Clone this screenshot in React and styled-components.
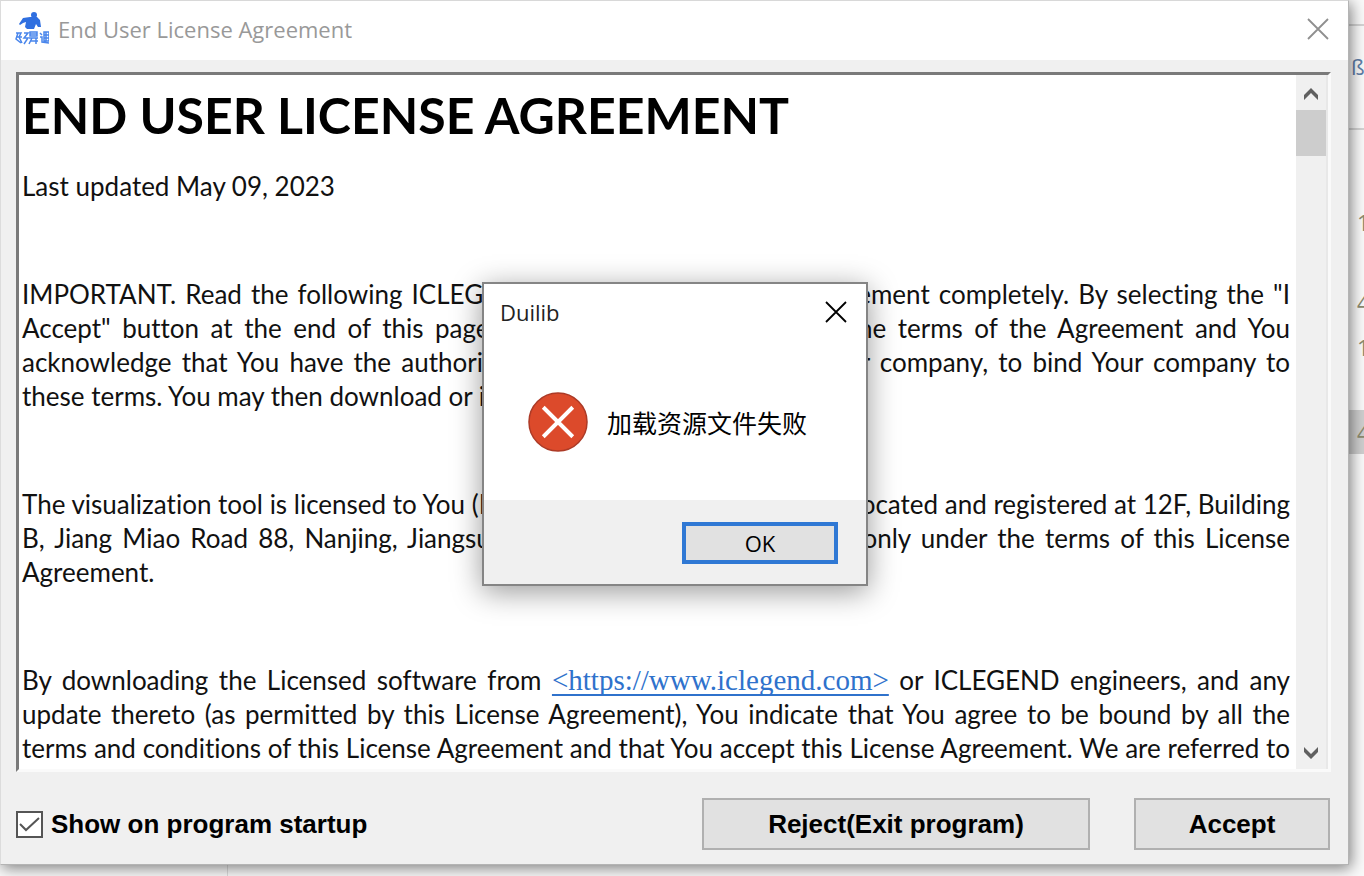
import React, { useState } from "react";
import styled, { createGlobalStyle, css } from "styled-components";

const GlobalStyle = createGlobalStyle`
  * {
    box-sizing: border-box;
  }

  body {
    margin: 0;
    background: #f7f7f7;
    color: #000;
    font-family: "Open Sans", "Noto Sans CJK SC", sans-serif;
    overflow: hidden;
  }
`;

const Desktop = styled.main`
  display: grid;
  grid-template-columns: minmax(0, 1fr) 15px;
  grid-template-rows: auto 12px;
  min-height: 100vh;
`;

const Window = styled.section`
  position: relative;
  z-index: 1;
  display: flex;
  flex-direction: column;
  border: 1px solid #b4b4b4;
  border-left-color: #dcdcdc;
  border-top-color: #d8d8d8;
  background: #f0f0f0;
  box-shadow: 2px 3px 14px rgba(0, 0, 0, 0.5);
`;

const TitleBar = styled.header`
  display: flex;
  align-items: center;
  gap: 9px;
  height: 59px;
  padding: 0 19px 4px 14px;
  background: #fff;
`;

const WindowTitle = styled.h2`
  flex: 1;
  margin: 0;
  color: #999;
  font-size: 22px;
  font-weight: 400;
  line-height: 32px;
`;

const IconButton = styled.button`
  display: flex;
  padding: 0;
  border: none;
  background: none;
  color: ${({ $color }) => $color || "#000"};
  cursor: pointer;
`;

const Sheet = styled.div`
  display: flex;
  margin: 12px 17px 0 15px;
  border: 3px solid;
  border-color: #7a7a7a #fafafa #fafafa #7a7a7a;
  background: #fff;
`;

const Agreement = styled.article`
  flex: 1;
  min-width: 0;
  height: 694px;
  padding: 0 6px 0 3px;
  overflow: hidden;
  color: #111;
  font-family: Lato, "Open Sans", sans-serif;
  font-size: 26px;
  font-variant-ligatures: none;
  line-height: 34px;
`;

const Heading = styled.h1`
  margin: 8px 0 22px;
  color: #000;
  font-size: 50px;
  font-weight: 700;
  line-height: 64px;
  white-space: nowrap;
`;

const Paragraph = styled.p`
  margin: 0 0 74px;
`;

const Line = styled.span`
  display: block;
  text-align: justify;
  text-align-last: ${({ $last }) => ($last ? "left" : "justify")};
  white-space: nowrap;
`;

const SiteLink = styled.a`
  color: #2f72cc;
  font-family: "Liberation Serif", serif;
  font-size: 29px;
  line-height: 30px;
  text-decoration-thickness: 2px;
  text-underline-offset: 4px;
  text-decoration-skip-ink: none;
`;

const Scrollbar = styled.div`
  display: flex;
  flex-direction: column;
  width: 32px;
  border-right: 2px solid #e8e8e8;
  background: #f0f0f0;
`;

const ScrollButton = styled(IconButton)`
  align-items: center;
  justify-content: center;
  height: 35px;
  padding-top: 2px;
`;

const Track = styled.div`
  flex: 1;
`;

const Thumb = styled.div`
  height: 46px;
  background: #cdcdcd;
`;

const Footer = styled.footer`
  display: flex;
  align-items: center;
  gap: 44px;
  padding: 26px 18px 14px 15px;
  font-family: "Liberation Sans", sans-serif;
  font-size: 26px;
  font-weight: 700;
`;

const StartupOption = styled.label`
  display: flex;
  flex: 1;
  align-items: center;
  gap: 8px;
`;

const CheckBox = styled.input`
  appearance: none;
  width: 27px;
  height: 27px;
  margin: 0;
  border: 2px solid #555;
  background: #fff;

  &:checked {
    background: #fff
      url("data:image/svg+xml,%3Csvg xmlns='http://www.w3.org/2000/svg' viewBox='0 0 23 23'%3E%3Cpath d='M2 11l6 6L21 5' fill='none' stroke='%23555' stroke-width='2'/%3E%3C/svg%3E");
  }
`;

const PushButton = styled.button`
  height: 52px;
  padding: 0;
  border: 2px solid #b0b0b0;
  background: #e1e1e1;
  color: #000;
  font: inherit;
  line-height: 30px;
  width: ${({ $wide }) => ($wide ? "388px" : "196px")};

  ${({ $primary }) =>
    $primary &&
    css`
      width: 156px;
      height: 42px;
      border: 4px solid #2f78d4;
      font-size: 22px;
    `}
`;

const Dialog = styled.div`
  position: absolute;
  top: 281px;
  left: 481px;
  display: flex;
  flex-direction: column;
  width: 386px;
  border: 2px solid #858585;
  background: #fff;
  box-shadow: 0 6px 28px rgba(0, 0, 0, 0.4);
`;

const DialogHeader = styled.header`
  display: flex;
  align-items: center;
  justify-content: space-between;
  height: 56px;
  padding: 0 19px 0 16px;
`;

const DialogTitle = styled.h3`
  margin: 0;
  color: #222;
  font-size: 22px;
  font-weight: 400;
  line-height: 32px;
`;

const DialogBody = styled.div`
  display: flex;
  align-items: center;
  gap: 19px;
  height: 160px;
  padding: 4px 0 0 44px;
`;

const Message = styled.p`
  margin: 0;
  font-family: "Noto Sans CJK SC", sans-serif;
  font-size: 25px;
  line-height: 36px;
`;

const DialogActions = styled.div`
  display: flex;
  justify-content: flex-end;
  padding: 22px 28px 20px;
  background: #f0f0f0;
`;

const Backdrop = styled.aside`
  display: flex;
  flex-direction: column;
  overflow: hidden;
  background: #fafafa;
  font-size: 22px;
  line-height: 44px;
`;

const BackdropRow = styled.div`
  height: ${({ $height }) => $height}px;
  padding-left: ${({ $flush }) => ($flush ? "2px" : "8px")};
  border-bottom: ${({ $ruled }) => ($ruled ? "2px solid #d4d4d4" : "none")};
  background: ${({ $selected }) => ($selected ? "#cfcfcf" : "transparent")};
  color: ${({ $color }) => $color || "#8c8c70"};
`;

const BottomStrip = styled.div`
  grid-column: 1 / -1;
  display: grid;
  grid-template-columns: 228px 1fr;
  background: #fafafa;
`;

const StripPane = styled.div`
  border-right: 1px solid #ddd;
`;

const AppLogo = () => (
  <svg width="34" height="34" viewBox="0 0 34 34" fill="none" stroke="#4a86ec">
    <circle cx="19" cy="3" r="3" fill="#2f6fe0" stroke="none" />
    <path d="M4 12L8 6l7-1h7l3 3 1 7h-3l-2-3-2 5h-7l-2-2 1-5-3 1-3 2z" fill="#2f6fe0" stroke="none" />
    <path d="M1 21h5l-2 4 3 6M3 21l-2 6 5 4M1 25h6M9 21h4l-4 5h4l-4 6M15 20h7v4h-7zM15 22h7M14 26h9M17 26l-3 6M21 26v6M15 29h8M25 21l2 2M25 25h2v5l7 1M29 20h5v9h-5zM29 23h5M29 26h5M31 20v9" strokeWidth="1.500" />
  </svg>
);

const CloseIcon = () => (
  <svg width="22" height="22" viewBox="0 0 22 22" fill="none" stroke="currentColor" strokeWidth="1.800">
    <path d="M1 1l20 20M21 1L1 21" />
  </svg>
);

const ErrorIcon = () => (
  <svg width="60" height="60" viewBox="0 0 61 61" fill="none">
    <circle cx="30.500" cy="30.500" r="29.500" fill="#dc4a2b" stroke="#ac3a26" strokeWidth="1.500" />
    <path d="M15.500 15.500l30 30M45.500 15.500l-30 30" stroke="#fff" strokeWidth="4" />
  </svg>
);

const Chevron = ({ down }) => (
  <svg width="16" height="14" viewBox="0 0 16 14" fill="#606060">
    <path d={down ? "M1 1v5l7 7 7-7V1L8 8z" : "M1 13V8l7-7 7 7v5L8 6z"} />
  </svg>
);

const App = () => {
  const [dialogOpen, setDialogOpen] = useState(true);
  const [showOnStartup, setShowOnStartup] = useState(true);

  return (
    <>
      <GlobalStyle />
      <Desktop>
        <Window>
          <TitleBar>
            <AppLogo />
            <WindowTitle>End User License Agreement</WindowTitle>
            <IconButton $color="#8f8f8f" aria-label="Close window">
              <CloseIcon />
            </IconButton>
          </TitleBar>

          <Sheet>
            <Agreement>
              <Heading>END USER LICENSE AGREEMENT</Heading>
              <Paragraph>Last updated May 09, 2023</Paragraph>
              <Paragraph>
                <Line>IMPORTANT. Read the following ICLEGEND Inc. End User License Agreement completely. By selecting the "I </Line>
                <Line>Accept" button at the end of this page, You are agreeing with all of the terms of the Agreement and You </Line>
                <Line>acknowledge that You have the authority to accept it, on behalf of Your company, to bind Your company to </Line>
                <Line $last>these terms. You may then download or install the software.</Line>
              </Paragraph>
              <Paragraph>
                <Line>The visualization tool is licensed to You (Licensee) by ICLEGEND MICRO, located and registered at 12F, Building </Line>
                <Line>B, Jiang Miao Road 88, Nanjing, Jiangsu, P.R. of China, for internal use only under the terms of this License </Line>
                <Line $last>Agreement.</Line>
              </Paragraph>
              <Paragraph>
                <Line>
                  By downloading the Licensed software from{" "}
                  <SiteLink href="https://www.iclegend.com">&lt;https://www.iclegend.com&gt;</SiteLink> or ICLEGEND engineers, and any
                </Line>
                <Line>update thereto (as permitted by this License Agreement), You indicate that You agree to be bound by all the </Line>
                <Line>terms and conditions of this License Agreement and that You accept this License Agreement. We are referred to </Line>
              </Paragraph>
            </Agreement>
            <Scrollbar>
              <ScrollButton aria-label="Scroll up">
                <Chevron />
              </ScrollButton>
              <Track>
                <Thumb />
              </Track>
              <ScrollButton aria-label="Scroll down">
                <Chevron down />
              </ScrollButton>
            </Scrollbar>
          </Sheet>

          <Footer>
            <StartupOption>
              <CheckBox
                type="checkbox"
                checked={showOnStartup}
                onChange={(e) => setShowOnStartup(e.target.checked)}
              />
              Show on program startup
            </StartupOption>
            <PushButton $wide>Reject(Exit program)</PushButton>
            <PushButton>Accept</PushButton>
          </Footer>

          {dialogOpen && (
            <Dialog role="alertdialog" aria-label="Duilib">
              <DialogHeader>
                <DialogTitle>Duilib</DialogTitle>
                <IconButton aria-label="Close dialog" onClick={() => setDialogOpen(false)}>
                  <CloseIcon />
                </IconButton>
              </DialogHeader>
              <DialogBody>
                <ErrorIcon />
                <Message>加载资源文件失败</Message>
              </DialogBody>
              <DialogActions>
                <PushButton $primary onClick={() => setDialogOpen(false)}>
                  OK
                </PushButton>
              </DialogActions>
            </Dialog>
          )}
        </Window>

        <Backdrop>
          <BackdropRow $height={26} $ruled />
          <BackdropRow $height={18} />
          <BackdropRow $height={86} $ruled $flush $color="#5f7fa8">ß</BackdropRow>
          <BackdropRow $height={70} />
          <BackdropRow $height={80}>1</BackdropRow>
          <BackdropRow $height={45}>4</BackdropRow>
          <BackdropRow $height={65}>1</BackdropRow>
          <BackdropRow $height={20} />
          <BackdropRow $height={44} $selected>4</BackdropRow>
        </Backdrop>

        <BottomStrip>
          <StripPane />
        </BottomStrip>
      </Desktop>
    </>
  );
};

export default App;
